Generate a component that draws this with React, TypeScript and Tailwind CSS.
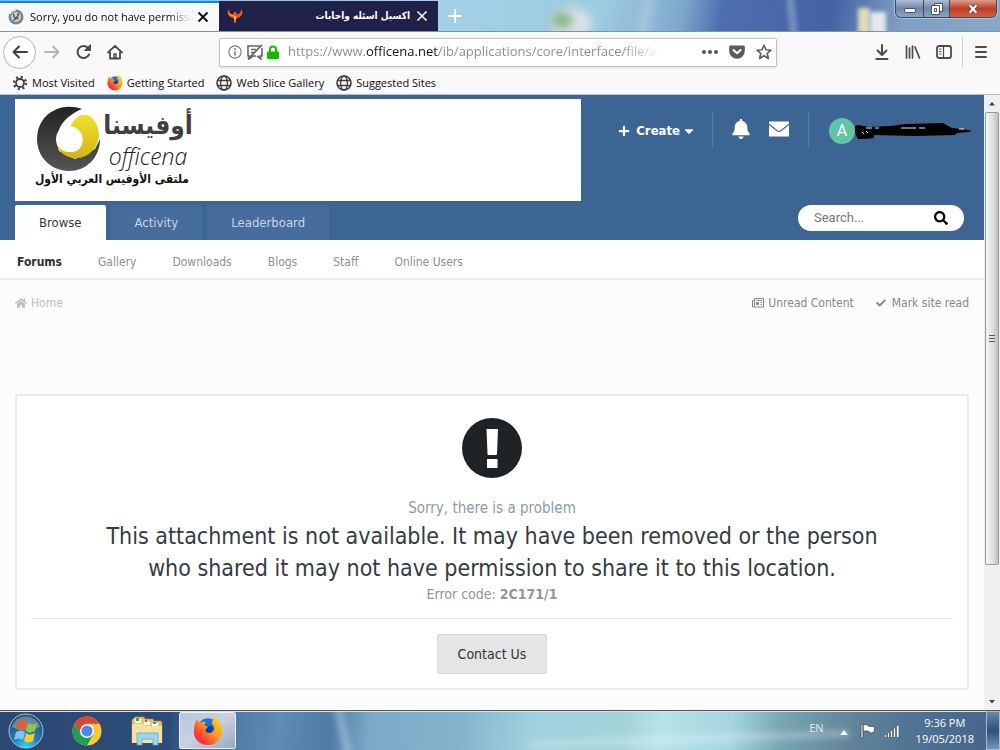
import type { ReactNode } from "react";
import { FaBell, FaCaretDown, FaCheck, FaHome, FaPlus, FaSearch } from "react-icons/fa";

const bookmarks = [
  { label: "Most Visited", icon: <GearIcon /> },
  { label: "Getting Started", icon: <FirefoxIcon className="size-4" /> },
  { label: "Web Slice Gallery", icon: <GlobeIcon /> },
  { label: "Suggested Sites", icon: <GlobeIcon /> },
];

const subNav = ["Gallery", "Downloads", "Blogs", "Staff", "Online Users"];

function GearIcon() {
  return (
    <svg viewBox="0 0 16 16" className="size-4" fill="none" stroke="#3f3f42">
      <circle cx="8" cy="8" r="4" strokeWidth="1.8" />
      <circle cx="8" cy="8" r="6" strokeWidth="2.4" strokeDasharray="2 2.71" />
    </svg>
  );
}

function GlobeIcon() {
  return (
    <svg viewBox="0 0 16 16" className="size-4" fill="none" stroke="#3f3f42" strokeWidth="1.3">
      <circle cx="8" cy="8" r="7" strokeWidth="1.6" />
      <ellipse cx="8" cy="8" rx="3.4" ry="7" />
      <path d="M1.5 5.5h13M1.5 10.5h13" />
    </svg>
  );
}

function FirefoxIcon({ className }: { className: string }) {
  return (
    <svg viewBox="0 0 32 32" className={className}>
      <defs>
        <linearGradient id="fox" x1="1" y1="0" x2="0" y2="1">
          <stop offset="0" stopColor="#ffe226" />
          <stop offset=".45" stopColor="#ff9a1e" />
          <stop offset=".75" stopColor="#ff3a32" />
          <stop offset="1" stopColor="#e0207a" />
        </linearGradient>
      </defs>
      <circle cx="16" cy="14" r="11.5" fill="#1673d8" />
      <path
        fill="url(#fox)"
        d="M4 3c1 2 2 3 4 4 2-1 4-1 6 0-2 1-2 3-1 4h4c0 2-4 2-4 4 1 4 6 4 9 1 2-3 0-6-2-8 1-3 1-5 2-8 6 4 10 10 9 17-1 8-7 14-15 14S1 25 1 17C1 12 2 7 4 3z"
      />
      <path fill="#153b9c" d="M15 11h5c2 2 2 4 0 6-3 2-6 1-7-2 2-1 3-2 2-4z" />
    </svg>
  );
}

function ToolButton({ label, children }: { label: string; children: ReactNode }) {
  return (
    <button aria-label={label} className="grid size-7 place-items-center">
      <svg viewBox="0 0 16 16" className="size-4" fill="none" stroke="#4a4a4f" strokeWidth="2" strokeLinecap="round" strokeLinejoin="round">
        {children}
      </svg>
    </button>
  );
}

function TabStrip() {
  return (
    <div className="relative flex h-8 shrink-0 overflow-hidden border-b border-[#7c93a8] bg-[linear-gradient(100deg,#8fbcd0_0%,#a2d0e6_44%,#9dcbe0_60%,#7fa9cc_68%,#4e6fae_72%,#4562a5_83%,#7f9fc4_90%,#88a8c4_100%)]">
      <div className="absolute top-2 left-[552px] h-8 w-10 rounded-full bg-[#d9dfe6] blur-xs" />
      <div className="absolute top-3 left-[552px] h-4 w-5 rounded-full bg-[#86b886] blur-xs" />
      <div className="absolute top-2 left-[858px] h-8 w-3 bg-[#dfdcbc] blur-[2px]" />
      <div className="absolute top-3 left-[870px] h-8 w-4 bg-[#e6e8ec] blur-[2px]" />
      <div className="absolute -top-2 left-[788px] h-12 w-2 -rotate-6 bg-white/25 blur-[2px]" />
      <div className="absolute -top-2 left-[640px] h-12 w-3 rotate-12 bg-white/20 blur-xs" />

      <div className="relative mt-px flex w-[219px] items-center border-t-2 border-[#0a84ff] bg-[#f9f9fa] pr-2.5 pl-2 text-[11px] text-[#0c0c0d]">
        <svg viewBox="0 0 16 16" className="size-4 shrink-0">
          <circle cx="8" cy="8" r="7.5" fill="#6f82ad" />
          <circle cx="8" cy="8" r="5" fill="#dcd68e" />
          <path d="M5.500 4.500c0 4 1 5 5 5M10.500 4c0 4-2 5-5 7.500" stroke="#385a9c" strokeWidth="1.500" fill="none" />
          <path d="M2 5a7 7 0 0 1 6-4" stroke="#e8ecf5" strokeWidth="1.4" fill="none" />
        </svg>
        <span className="ml-1.5 flex-1 overflow-hidden whitespace-nowrap [mask-image:linear-gradient(90deg,#000_86%,transparent)]">
          Sorry, you do not have permission
        </span>
        <button aria-label="Close tab" className="ml-1.5">
          <svg viewBox="0 0 12 12" className="size-3" stroke="#0c0c0d" strokeWidth="1.8">
            <path d="M1.5 1.5l9 9M10.5 1.5l-9 9" />
          </svg>
        </button>
      </div>
      <div className="relative mt-px flex w-[219px] items-center bg-[#20214a] pr-2.5 pl-2 text-xs text-white">
        <svg viewBox="0 0 16 16" className="size-4 shrink-0">
          <path fill="#f2541b" d="M2 1C-1 5 1 9 6 10l1 1.500V15h2v-3.500L10 10c5-1 7-5 4-9 0 3-1 5-4 5.500L9.500 5 8 3.500 6.500 5 6 6.500C3 6 2 4 2 1z" />
          <path fill="#ffb52e" d="M1.500 4c.5 3 2.500 4 5 4.500L8 14l1.500-5.500c-1-.5-2-.5-3-1C4 7 2.500 6 1.500 4z" />
        </svg>
        <span dir="rtl" className="ml-1 flex-1 truncate text-[10px] font-bold [font-family:'DejaVu_Sans_Condensed','DejaVu_Sans',sans-serif]">
          اكسيل اسئله واجابات
        </span>
        <button aria-label="Close tab" className="ml-1.5">
          <svg viewBox="0 0 12 12" className="size-3" stroke="#fff" strokeWidth="1.6">
            <path d="M1.5 1.5l9 9M10.5 1.5l-9 9" />
          </svg>
        </button>
      </div>
      <button aria-label="New tab" className="relative ml-2.5">
        <svg viewBox="0 0 14 14" className="size-3.5" stroke="#fff" strokeWidth="2">
          <path d="M7 0v14M0 7h14" />
        </svg>
      </button>

      <div className="absolute top-0 right-[3px] flex h-[18px] overflow-hidden rounded-b-md border border-t-0 border-[#39485e] shadow-[0_0_0_1px_#ffffff60]">
        <button aria-label="Minimize" className="grid w-7 place-items-center border-r border-[#39485e] bg-gradient-to-b from-[#aebdd2] via-[#6d86ab] to-[#8ca4c2]">
          <span className="mt-1 h-[5px] w-3 rounded-xs border border-[#44546b] bg-white" />
        </button>
        <button aria-label="Restore" className="grid w-[26px] place-items-center border-r border-[#39485e] bg-gradient-to-b from-[#aebdd2] via-[#6d86ab] to-[#8ca4c2]">
          <svg viewBox="0 0 12 12" className="size-3" fill="#fff" stroke="#44546b">
            <path d="M3.5.5h8v8h-8z" />
            <path d="M.5 2.5h8v9h-8zM3.5 5.5h2v3h-2z" fillRule="evenodd" />
          </svg>
        </button>
        <button aria-label="Close window" className="grid w-[46px] place-items-center bg-gradient-to-b from-[#dc9a8c] via-[#bd3d25] to-[#cf5f43]">
          <svg viewBox="0 0 12 12" className="h-2.5 w-3" fill="none">
            <path d="M2 1.5l8 9M10 1.5l-8 9" stroke="#5a3a40" strokeWidth="4.4" />
            <path d="M2 1.5l8 9M10 1.5l-8 9" stroke="#fff" strokeWidth="2.6" />
          </svg>
        </button>
      </div>
    </div>
  );
}

function Toolbar() {
  return (
    <div className="flex h-10 shrink-0 items-center bg-[#f9f9fa] pr-1">
      <button aria-label="Back" className="ml-[3px] grid size-[33px] place-items-center rounded-full border border-[#b5b5b8] bg-white">
        <svg viewBox="0 0 16 16" className="size-4" fill="none" stroke="#3f3f43" strokeWidth="2" strokeLinecap="round" strokeLinejoin="round">
          <path d="M15 8H1.5M7 2.5L1.5 8 7 13.5" />
        </svg>
      </button>
      <button aria-label="Forward" className="ml-2">
        <svg viewBox="0 0 16 16" className="size-4" fill="none" stroke="#b4b4b6" strokeWidth="1.8" strokeLinecap="round" strokeLinejoin="round">
          <path d="M1 8h13.5M9 2.5L14.5 8 9 13.5" />
        </svg>
      </button>
      <div className="ml-2.5 flex gap-[3px]">
        <ToolButton label="Reload">
          <path d="M13 10.5A6 6 0 1 1 12 4" />
          <path d="M14.5 1v5.5H9z" fill="#4a4a4f" strokeWidth="1" />
        </ToolButton>
        <ToolButton label="Home">
          <path d="M1 8.5L8 1.8l7 6.7M3 8v6.5h10V8" strokeWidth="1.8" />
          <path d="M7 14v-4h2v4z" strokeWidth="1.4" />
        </ToolButton>
      </div>

      <div className="ml-[90px] flex h-[29px] flex-1 items-center rounded-xs border border-[#c4c4c6] bg-white px-2 shadow-sm">
        <svg viewBox="0 0 16 16" className="size-3.5 shrink-0" fill="none" stroke="#77777a" strokeWidth="1.3">
          <circle cx="8" cy="8" r="7" />
          <path d="M8 7v5M8 3.8v1.8" strokeWidth="1.8" />
        </svg>
        <svg viewBox="0 0 18 16" className="ml-1 h-4 w-[18px] shrink-0" fill="none" stroke="#66666a" strokeWidth="1.6">
          <path d="M10 12H7l-4 3v-3H2V2h12M16 4v8h-2l1 3-4-3M5 5.5h5M5 8.5h3M2 15L16 1" />
        </svg>
        <svg viewBox="0 0 14 14" className="ml-0.5 size-3.5 shrink-0">
          <path d="M4 7V4.500a3 3 0 0 1 6 0V7" fill="none" stroke="#12bc00" strokeWidth="2" />
          <rect x="1" y="6.500" width="12" height="7.500" rx="1" fill="#12bc00" />
        </svg>
        <input
          aria-label="Address"
          readOnly
          value="https://www.officena.net/ib/applications/core/interface/file/attachment.php"
          className="ml-2 w-[372px] bg-[linear-gradient(90deg,#8a8a8a_78px,#111_78px,#111_150px,#8a8a8a_150px,#8a8a8a_90%,transparent)] bg-clip-text text-[13px] text-transparent outline-none"
        />
        <div className="ml-auto flex items-center gap-[11px]">
          <button aria-label="Page actions" className="flex gap-[2px]">
            <span className="size-1 rounded-full bg-[#55555a]" />
            <span className="size-1 rounded-full bg-[#55555a]" />
            <span className="size-1 rounded-full bg-[#55555a]" />
          </button>
          <button aria-label="Save to Pocket">
            <svg viewBox="0 0 16 16" className="size-4">
              <path d="M1.500 1.500h13a1.300 1.300 0 0 1 1.300 1.300V7a7.800 7.800 0 0 1-15.600 0V2.800a1.300 1.300 0 0 1 1.300-1.300z" fill="#5c5c60" />
              <path d="M4.500 6L8 9.300 11.500 6" fill="none" stroke="#fff" strokeWidth="2" strokeLinecap="round" strokeLinejoin="round" />
            </svg>
          </button>
          <button aria-label="Bookmark this page" className="-mr-1">
            <svg viewBox="0 0 16 16" className="size-4" fill="none" stroke="#5c5c60" strokeWidth="1.6" strokeLinejoin="round">
              <path d="M8 1.200l2 4.600 5 .4-3.800 3.300 1.200 5L8 11.800l-4.400 2.700 1.200-5L1 6.200l5-.4z" />
            </svg>
          </button>
        </div>
      </div>

      <div className="ml-[91px] flex gap-[3px]">
        <ToolButton label="Downloads">
          <path d="M8 1v9M3.500 6.500L8 11l4.500-4.500M2.500 15h11" />
        </ToolButton>
        <ToolButton label="Library">
          <path d="M1.500 2v12M4.500 4v10M7.500 2v12M10 3l4.500 11" strokeWidth="1.7" />
        </ToolButton>
        <ToolButton label="Sidebars">
          <rect x="1" y="2" width="14" height="12" rx="2" strokeWidth="1.8" />
          <path d="M7.500 2v12M3.500 5h1.500M3.500 7.500h1.500M3.500 10h1.500" strokeWidth="1.200" />
        </ToolButton>
      </div>
      <div className="ml-1 h-8 w-px bg-[#d2d2d4]" />
      <div className="ml-1 mr-px">
        <ToolButton label="Menu">
          <path d="M3 3h10M3 8h10M3 13h10" />
        </ToolButton>
      </div>
    </div>
  );
}

function BookmarksBar() {
  return (
    <div className="flex h-[23px] shrink-0 items-center gap-3 border-b border-[#b9bec6] bg-[#f9f9fa] pl-3 text-[11px] text-[#0c0c0d]">
      {bookmarks.map((b) => (
        <a key={b.label} href="#" className="flex items-center gap-1 whitespace-nowrap">
          {b.icon}
          {b.label}
        </a>
      ))}
    </div>
  );
}

function Logo() {
  return (
    <svg viewBox="0 0 200 102" className="h-[102px] w-[200px]" role="img" aria-label="Officena">
      <defs>
        <linearGradient id="ring" x1="0" y1="0" x2="0" y2="1">
          <stop offset="0" stopColor="#232323" />
          <stop offset="1" stopColor="#555" />
        </linearGradient>
        <linearGradient id="gold" x1="0" y1="0" x2="0" y2="1">
          <stop offset="0" stopColor="#f0e02c" />
          <stop offset="1" stopColor="#d3b50f" />
        </linearGradient>
      </defs>
      <path fill="url(#ring)" d="M67 10C58 7 48 7 40 11 28 16 22 28 22 40c0 18 14 32 32 32 17 0 31-13 31-32L80 50 60 60 44 52C38 32 48 18 67 10z" />
      <path fill="url(#gold)" d="M58 23C62 16 72 13 77 19 86 28 86 42 78 51 68 63 50 61 44 50 42 47 41 44 42 41 46 54 59 56 65 49 71 41 67 29 55 28z" />
      <circle cx="54" cy="40" r="13" fill="#fff" />
      <text x="133" y="35" textAnchor="middle" fontSize="26" fontWeight="700" fill="#3f3f3f" fontFamily="DejaVu Sans Condensed, DejaVu Sans, sans-serif">أوفيسنا</text>
      <text x="133" y="66" textAnchor="middle" fontSize="23" fontStyle="italic" fill="#222" fontFamily="Open Sans, sans-serif" fontWeight="300">officena</text>
      <text x="97" y="84" textAnchor="middle" fontSize="12" fontWeight="700" fill="#111" fontFamily="DejaVu Sans Condensed, DejaVu Sans, sans-serif">ملتقى الأوفيس العربي الأول</text>
    </svg>
  );
}

function SiteHeader() {
  return (
    <header className="bg-[#3d6594] pt-1 pl-[15px]">
      <div className="flex items-start justify-between">
        <a href="#" className="block h-[102px] w-[566px] bg-white">
          <Logo />
        </a>
        <div className="mt-3 flex h-9 items-center pr-[11px] text-white">
          <button className="flex items-center pt-1 text-[13px] font-bold">
            <FaPlus className="mr-1.5 size-3" />
            Create
            <FaCaretDown className="ml-0.5 size-3.5" />
          </button>
          <div className="ml-4 h-9 w-px bg-[#577aa3]" />
          <button aria-label="Notifications" className="ml-[18px]">
            <FaBell className="size-5" />
          </button>
          <button aria-label="Messages" className="ml-[18px]">
            <svg viewBox="0 0 20 16" className="h-4 w-5" fill="#fff">
              <path d="M0 2.500V.5h20v2L11.500 9.300q-1.500 1-3 0zM0 4l7.800 6.300q2.200 1.500 4.400 0L20 4v11.500H0z" />
            </svg>
          </button>
          <div className="ml-[19px] h-9 w-px bg-[#577aa3]" />
          <a href="#" aria-label="Account" className="ml-5 flex items-center pt-1">
            <span className="grid size-[26px] place-items-center rounded-full bg-[#62c4a5] text-base leading-none [font-family:Roboto,sans-serif]">A</span>
            <svg viewBox="0 0 118 16" className="h-4 w-[118px]">
              <path d="M0 3l3-1 11 2 22-1 14-2 38-1 9 5 17 2q4 1 0 2l-12 1-2 2-40 1-41-1v3l-9 1-7 0-3-6z" fill="#000" />
              <path d="M11 5h6M20 5h4M46 5h15M64 5h6M104 6h5M7 9l2 2M11 8l2 2" stroke="#e7ebf5" />
            </svg>
          </a>
        </div>
      </div>
      <div className="mt-1 flex justify-between">
        <nav className="flex gap-[5px] text-[13px] [&>a]:flex [&>a]:h-[35px] [&>a]:items-center [&>a]:rounded-t-xs">
          <a href="#" className="bg-white px-6 text-[#333a40]">Browse</a>
          <a href="#" className="bg-[#466d9b] px-6 text-[#c9d6e5]">Activity</a>
          <a href="#" className="bg-[#466d9b] px-6 text-[#c9d6e5]">Leaderboard</a>
        </nav>
        <form className="mr-5 flex h-[26px] w-[166px] items-center rounded-full bg-white pr-4 pl-4">
          <input aria-label="Search" placeholder="Search..." className="min-w-0 flex-1 text-[13px] outline-none placeholder:text-[#777] [font-family:Roboto,sans-serif]" />
          <button type="button" aria-label="Submit search">
            <FaSearch className="size-3.5 text-black" />
          </button>
        </form>
      </div>
    </header>
  );
}

function ErrorCard() {
  return (
    <section className="mx-[15px] mt-[77px] mb-5 rounded-xs border-2 border-[#ebebeb] bg-white px-3.5 pt-[22px] pb-3.5 text-center">
      <svg viewBox="0 0 60 60" className="mx-auto size-[60px]">
        <circle cx="30" cy="30" r="30" fill="#1f2326" />
        <path fill="#fff" d="M24.500 11h11.500l-1 25q0 1-1 1h-7.500q-1 0-1-1zM25 41h10.500v9H25z" />
      </svg>
      <p className="mt-[18px] text-[15px] leading-6 text-[#8e9ba5]">Sorry, there is a problem</p>
      <h1 className="mx-auto max-w-[800px] text-[23px] leading-8 text-[#333b42]">
        This attachment is not available. It may have been removed or the person who shared it may not have permission to share it to this location.
      </h1>
      <p className="text-sm leading-5 text-[#8f979d]">
        Error code: <b>2C171/1</b>
      </p>
      <hr className="mt-3.5 border-[#e6e6e6]" />
      <a href="#" className="mt-[15px] inline-flex h-10 items-center rounded-xs border border-[#d9d9d9] bg-[#e5e5e5] px-5 text-sm text-[#333]">
        Contact Us
      </a>
    </section>
  );
}

function Scrollbar() {
  return (
    <div className="flex w-4 shrink-0 flex-col items-center bg-[#efefef]">
      <svg viewBox="0 0 16 17" className="h-[17px] w-4">
        <path d="M5 10.500h6L8 7z" fill="#444" />
      </svg>
      <div className="grid w-3.5 flex-[453] place-items-center rounded-xs border border-[#979797] bg-gradient-to-r from-[#f5f5f5] via-[#e2e2e4] to-[#bfc0c4]">
        <svg viewBox="0 0 8 8" className="size-2" stroke="#55555a">
          <path d="M1 .5h6M1 3.500h6M1 6.500h6" />
        </svg>
      </div>
      <div className="flex-[128]" />
      <svg viewBox="0 0 16 17" className="h-[17px] w-4">
        <path d="M5 7h6l-3 3.500z" fill="#444" />
      </svg>
    </div>
  );
}

function Taskbar() {
  return (
    <footer className="relative flex h-10 shrink-0 items-center overflow-hidden border-t border-[#4a5560] bg-[linear-gradient(95deg,#2b4874_0%,#2d4b78_17%,#456d9d_20%,#5e8cb2_28%,#4f7ba5_33%,#7ba9c7_37%,#84b4cd_46%,#9fd0de_53%,#a3d3d9_62%,#b5e3e8_66%,#a5d6de_73%,#78a5b2_78%,#628499_85%,#4a6c92_94%,#48658b_100%)] text-[11px] text-white shadow-[inset_0_1px_0_#d4e2ec]">
      <div className="absolute -top-4 left-[340px] h-20 w-2 -rotate-12 bg-white/30 blur-[3px]" />
      <div className="absolute top-6 left-[530px] h-2 w-80 -rotate-2 rounded-full bg-white/25 blur-[3px]" />
      <button aria-label="Start" className="relative ml-2">
        <svg viewBox="0 0 36 36" className="size-9">
          <defs>
            <radialGradient id="orb" cx=".5" cy="1" r=".9">
              <stop offset="0" stopColor="#2fe0ff" />
              <stop offset=".45" stopColor="#1d7fb8" />
              <stop offset="1" stopColor="#31506e" />
            </radialGradient>
          </defs>
          <circle cx="18" cy="18" r="17" fill="url(#orb)" stroke="#a9c3d6" />
          <path d="M4 14a14.500 14.500 0 0 1 28 0q-14 7-28 0z" fill="#fff" opacity=".28" />
          <path d="M10 9q5-3 9 0l-2 8q-4-3-9 0z" fill="#ee5a28" />
          <path d="M20 10q4 3 9 0l-2 8q-5 3-9 0z" fill="#94c63d" />
          <path d="M8 19q5-3 9 0l-2 8q-4-3-9 0z" fill="#7fc4f0" />
          <path d="M18 20q4 3 9 0l-2 8q-5 3-9 0z" fill="#fdc930" />
        </svg>
      </button>
      <button aria-label="Google Chrome" className="relative ml-7">
        <svg viewBox="0 0 30 30" className="size-[30px]">
          <circle cx="15" cy="15" r="14.500" fill="#fbc934" />
          <path d="M2.400 7.800A14.500 14.500 0 0 1 27.600 7.800H15L8.700 18.600z" fill="#d9453a" />
          <path d="M2.400 7.800A14.500 14.500 0 0 0 15 29.500l6.300-10.900H8.700z" fill="#1f9d58" />
          <circle cx="15" cy="15" r="7" fill="#fff" />
          <circle cx="15" cy="15" r="5.500" fill="#4a86ee" />
        </svg>
      </button>
      <button aria-label="Windows Explorer" className="relative ml-[29px]">
        <svg viewBox="0 0 32 30" className="h-[30px] w-8">
          <path d="M1 4l3-3h9l1 2h8l1 2h7l1 2v19H1z" fill="#e3c66c" stroke="#b0923d" strokeWidth=".6" />
          <path d="M4 3h6v4H4zM13 5h6v4h-6zM21 7h6v4h-6z" fill="#fff" />
          <path d="M5 2h3v3H5z" fill="#39a845" />
          <path d="M14 4h2v2h-2z" fill="#d44c38" />
          <path d="M22 6h3v2h-3z" fill="#3c8be0" />
          <path d="M1 8h12l2 2h16v17H1z" fill="#f4e2a0" />
          <path d="M6 17h21v12h-5v-6H11v6H6z" fill="#9bd6ef" stroke="#5aa9cf" strokeWidth=".8" />
        </svg>
      </button>
      <button aria-label="Firefox" className="relative ml-4 grid h-[37px] w-[57px] place-items-center rounded-xs border border-[#e9eff6] bg-gradient-to-br from-[#b9c7db] via-[#c8d2e1] to-[#93a8c6]">
        <FirefoxIcon className="size-[30px]" />
      </button>

      <div className="relative ml-auto flex h-full items-center">
        <span className="pb-1 text-[#e6ecef]">EN</span>
        <svg viewBox="0 0 8 6" className="mt-1 ml-4 h-1.5 w-2">
          <path d="M0 5h8L4 0z" fill="#f1f5f8" />
        </svg>
        <svg viewBox="0 0 16 16" className="ml-3 size-4" fill="#fff" stroke="#3d4a55" strokeWidth=".8">
          <path d="M1 1h2v14H1zM3 2q3-1 5 0v1l7 1-1 5q-3 2-5 0l-1-1H3z" />
        </svg>
        <svg viewBox="0 0 16 14" className="ml-2 h-3.5 w-4" fill="#fff" stroke="#3d4a55" strokeWidth=".6">
          <path d="M.5 10.500h2v3h-2zM3.500 8.500h2v5h-2zM6.500 6.500h2v7h-2zM9.500 4h2v9.500h-2zM12.500 1.500h2.500v12h-2.500z" />
        </svg>
        <div className="ml-4 text-center leading-4">
          <div>9:36 PM</div>
          <div>19/05/2018</div>
        </div>
        <button aria-label="Show desktop" className="ml-3 h-full w-3.5 border border-[#a9bccd] bg-gradient-to-b from-[#6b87a8] via-[#2f5078] to-[#6f97bd]" />
      </div>
    </footer>
  );
}

export default function App() {
  return (
    <div className="flex min-h-screen flex-col bg-[#fcfcfc] [font-family:'Open_Sans','DejaVu_Sans',sans-serif]">
      <TabStrip />
      <Toolbar />
      <BookmarksBar />
      <div className="flex flex-1">
        <main className="min-w-0 flex-1 [font-family:'DejaVu_Sans_Condensed','DejaVu_Sans',sans-serif]">
          <SiteHeader />
          <nav className="flex h-10 items-center gap-9 border-b-2 border-[#ececec] bg-white pt-1.5 pl-[17px] text-xs text-[#8b9092]">
            <a href="#" className="font-bold text-[#2c3134]">Forums</a>
            {subNav.map((item) => (
              <a key={item} href="#">{item}</a>
            ))}
          </nav>
          <div className="flex h-[37px] items-end justify-between px-[15px] pb-1.5 text-xs text-[#85898c]">
            <a href="#" className="flex items-center gap-1 text-[#bcbfc1]">
              <FaHome className="size-3" />
              Home
            </a>
            <div className="flex gap-[22px]">
              <a href="#" className="flex items-center gap-1">
                <svg viewBox="0 0 12 10" className="h-2.5 w-3" fill="none" stroke="currentColor">
                  <path d="M2.500.5h9v8.500h-11V2.500h2zM2.500 2v6.500M4.500 2.500h5.500M8.500 4.500H10M8.500 6.500H10" />
                  <path d="M4.500 4.500h2v2h-2z" fill="currentColor" />
                </svg>
                Unread Content
              </a>
              <a href="#" className="flex items-center gap-1.5">
                <FaCheck className="size-2.5" />
                Mark site read
              </a>
            </div>
          </div>
          <ErrorCard />
        </main>
        <Scrollbar />
      </div>
      <Taskbar />
    </div>
  );
}
